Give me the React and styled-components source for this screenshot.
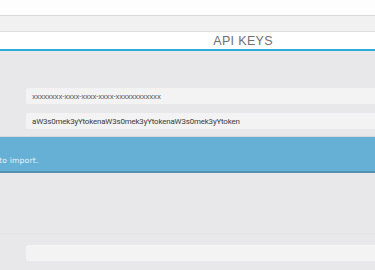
import React from "react";
import styled, { createGlobalStyle } from "styled-components";

const Global = createGlobalStyle`
  html, body { margin: 0; padding: 0; background: #e8e8ea; }
  body { width: 375px; height: 270px; overflow: hidden; font-family: Roboto, "Liberation Sans", sans-serif; }
`;

const Page = styled.div`
  width: 375px;
  height: 270px;
  display: flex;
  flex-direction: column;
  background: #e8e8ea;
`;

const TopBar = styled.div`
  height: 15px;
  background: #fdfdfd;
  border-bottom: 1px solid #d9d9d9;
`;

const SubBar = styled.div`
  height: 15px;
  background: #f1f1f1;
  border-bottom: 1px solid #dfdfdf;
`;

const TitleBar = styled.div`
  height: 17px;
  background: #ffffff;
  border-bottom: 2px solid #2cacd6;
  display: flex;
  align-items: center;
  justify-content: flex-end;
  padding-right: 102px;
`;

const Title = styled.h1`
  margin: 0;
  font-family: "Liberation Sans", Arial, sans-serif;
  font-weight: 400;
  font-size: 12.5px;
  letter-spacing: 0.35px;
  color: #707070;
  line-height: 1;
  padding-top: 1px;
`;

const Content = styled.div`
  display: flex;
  flex-direction: column;
  padding-top: 37px;
`;

const Field = styled.div`
  margin-left: 26px;
  height: 16px;
  background: #f3f3f3;
  border-radius: 2px 0 0 2px;
  display: flex;
  align-items: center;
  padding-left: 6px;
  font-size: ${(p) => (p.$small ? "8px" : "7.9px")};
  color: ${(p) => (p.$muted ? "#666" : "#3a3a3a")};
  letter-spacing: ${(p) => (p.$small ? "-0.2px" : "-0.15px")};
  margin-bottom: ${(p) => p.$mb || 0}px;
  white-space: nowrap;
  overflow: hidden;
`;

const Banner = styled.div`
  margin-top: 7px;
  background: #66b0d5;
  border-top: 1px solid #d5d8dc;
  border-bottom: 2px solid #5490b0;
  display: flex;
  align-items: flex-end;
  padding-bottom: 6px;
  box-sizing: border-box;
  height: 37px;
`;

const BannerText = styled.span`
  font-family: "DejaVu Sans", sans-serif;
  font-size: 7.6px;
  color: #e8f2f8;
  margin-left: -1px;
  letter-spacing: 0.2px;
`;

const Spacer = styled.div`
  height: 60px;
  border-bottom: 1px solid #e4e4e6;
`;

const Bottom = styled.div`
  padding-top: 11px;
`;

export default function App() {
  return (
    <Page>
      <Global />
      <TopBar />
      <SubBar />
      <TitleBar>
        <Title>API KEYS</Title>
      </TitleBar>
      <Content>
        <Field $small $muted $mb={9}>xxxxxxxx-xxxx-xxxx-xxxx-xxxxxxxxxxxx</Field>
        <Field>aW3s0mek3yYtokenaW3s0mek3yYtokenaW3s0mek3yYtoken</Field>
        <Banner>
          <BannerText>to import.</BannerText>
        </Banner>
        <Spacer />
        <Bottom>
          <Field />
        </Bottom>
      </Content>
    </Page>
  );
}
